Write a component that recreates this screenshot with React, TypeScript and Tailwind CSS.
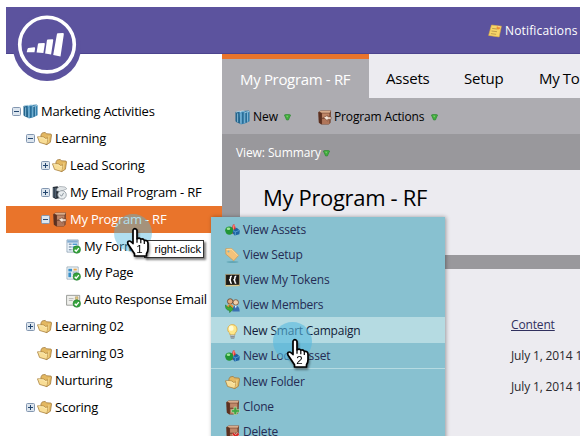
import type { ReactNode } from "react";

type IconName =
  | "books" | "folder" | "program" | "email" | "form" | "page" | "mail"
  | "assets" | "tag" | "tokens" | "members" | "bulb" | "clone" | "delete" | "note";

function Check() {
  return (
    <>
      <circle cx="11.5" cy="11.3" r="4" fill="#35a33c" stroke="#1f7a2c" strokeWidth=".6" />
      <path d="M9.3 11.4l1.6 1.7 2.8-3.4" fill="none" stroke="#fff" strokeWidth="1.4" />
    </>
  );
}

function Cabinet() {
  return (
    <>
      <path d="M1.5 2L4 .5h11l-.5 13-2 2H4.5L2 13.5z" fill="#754631" />
      <path d="M2.5 1.5L4.2.7H14.7L13.5 3H5z" fill="#d9ad8c" />
      <path d="M1.5 2L5 3.4v11.8L2 13.3z" fill="#5c3020" />
      <path d="M5.4 3.6h7.8v4.6H5.4z" fill="#bf8768" />
      <path d="M5.4 9.4h7.8V15H5.4z" fill="#b0765a" />
    </>
  );
}

const art: Record<IconName, ReactNode> = {
  books: (
    <>
      <path d="M.5 2L4.5 1 6 2.5V15L2 13.3.5 12z" fill="#24658d" />
      <path d="M4.5 1.5L9 .7l1.5 1.8v12L6 15.5z" fill="#438fbd" />
      <path d="M9 1L14.5.5 15.5 1.5V12L10.5 14.5z" fill="#3480ad" />
      <path d="M1 2.3L4.7 1.2l1.5 1.6M5.2 1.7L9 .9l1.5 1.8L15.2 1.6" fill="none" stroke="#c3e0ee" strokeWidth=".9" />
      <path d="M2.8 3.6v9.6M6.3 3.5v11M10.5 3.2v10.6M13.2 2.7v9.8" stroke="#a5d2e9" strokeWidth=".8" />
      <path d="M8.3 2.6v12M11.9 2.8v10.6" stroke="#1d587d" strokeWidth=".9" />
    </>
  ),
  folder: (
    <>
      <path d="M4.2 4.2L5.6 2l3.2-.5 1 1.4 5.2.4.5 1-1.2 7.7-3.8 2.5-6.3-3.5z" fill="#e3b862" stroke="#a0783a" strokeWidth=".8" />
      <path d="M.5 6.2l6.8.2 1.5 1.5 3.2-.5-1.5 7.1-7.8-2.3z" fill="#f8dd96" stroke="#a77c38" strokeWidth=".8" />
      <path d="M1.6 7l5.4.3 1.5 1.6 2-.2" fill="none" stroke="#fff1bd" strokeWidth=".8" />
      <path d="M12.8 5.2l-1.3 8" stroke="#f6da92" strokeWidth=".9" />
    </>
  ),
  program: (
    <>
      <Cabinet />
      <path d="M7 8l4.5-2.4v1.8H15v2.4h-3.5v2z" fill="#f9eadc" stroke="#6c3926" strokeWidth=".6" />
    </>
  ),
  email: (
    <>
      <path d="M.8 2l5-.7 2 2V14l-4 1-3-2z" fill="#252c34" />
      <path d="M5 4l3-2.5 6 .6 1.8 2-7 3-4-1z" fill="#e0e4e6" stroke="#868e96" strokeWidth=".6" />
      <path d="M2 3v10M4 3v11" stroke="#617489" />
      <circle cx="10.7" cy="10.5" r="4.5" fill="#e9edef" stroke="#8e979e" strokeWidth=".9" />
      <path d="M8.2 10.3l2.2 1.5 2-3.4" fill="none" stroke="#87929b" />
    </>
  ),
  form: (
    <>
      <path d="M1 1h12v13H1z" fill="#edf5fc" stroke="#7890a5" strokeWidth=".7" />
      <path d="M1.4 1.4h11.2v2.5H1.4z" fill="#83acd0" />
      <path d="M3 5.5h3M3 8.5h3M3 11.5h3" stroke="#526e8c" />
      <path d="M7 5.5h5M7 8.5h4" stroke="#4c99d2" strokeWidth="1.6" />
      <Check />
    </>
  ),
  page: (
    <>
      <path d="M1 1h12v13H1z" fill="#f1f6fa" stroke="#8498a8" strokeWidth=".7" />
      <path d="M2.5 2.8h4v3h-4zM2.5 7h3v5h-3z" fill="#398fc7" />
      <path d="M8 2.8h3.5v2H8z" fill="#e5a64e" />
      <path d="M7 6.5h5M7 8.5h5" stroke="#7c98af" />
      <Check />
    </>
  ),
  mail: (
    <>
      <path d="M.6 2.5h14V13H.6z" fill="#f0f0ec" stroke="#8d8f8b" strokeWidth=".9" />
      <path d="M3 6h5M3 8h4" stroke="#b2b3b0" />
      <path d="M10 4h2.8v3H10z" fill="#e3c67f" stroke="#9b8956" strokeWidth=".5" />
      <Check />
    </>
  ),
  assets: (
    <>
      <path d="M6 11.5l2.5-10h1.7L13 11z" fill="#d52a28" />
      <path d="M7.3 10L9 1.8l1.5.2L9 9z" fill="#ff8179" />
      <circle cx="4.6" cy="8" r="4.4" fill="#219535" />
      <ellipse cx="3.7" cy="6.2" rx="1.9" ry="1.3" fill="#9ce695" />
      <path d="M8.3 8.2l4.2-3.1 3.3 2.8-.5 4-5 1.3L8.3 11z" fill="#1d63a3" />
      <path d="M8.5 8.2l2.8 1.2 4-1.5M11 9.4v3.4" stroke="#68aadb" fill="none" strokeWidth=".8" />
    </>
  ),
  tag: (
    <>
      <ellipse cx="8" cy="15" rx="6.5" ry=".8" fill="#579fae" />
      <path d="M.8.8l6.4-.2 7.3 7.3-5.2 5.8L.9 6.5z" fill="#f4c27a" stroke="#cf9448" strokeWidth=".7" />
      <path d="M1.6 1.6l5.4-.3 6.7 6.7" fill="none" stroke="#ffe0a4" strokeWidth="1" />
      <circle cx="3.7" cy="3.7" r="1.1" fill="#83b5bb" />
    </>
  ),
  tokens: (
    <>
      <path d="M.6 1.5h14.8v12H.6z" fill="#1d1b18" stroke="#b6a178" strokeWidth=".8" />
      <path d="M7.3 3.5Q5.7 3.5 5.9 5.5q0 1.5-1.5 1.8Q5.9 7.6 5.9 9.3q0 1.7 1.4 1.7M12 3.5q-1.6 0-1.4 2 0 1.5-1.5 1.8 1.5.3 1.5 2 0 1.7 1.4 1.7" fill="none" stroke="#fff" strokeWidth="1.6" />
      <path d="M.6 13.5l14.8-.3" stroke="#d9c78b" strokeWidth="1.6" />
    </>
  ),
  members: (
    <>
      <circle cx="5.5" cy="3.7" r="2.9" fill="#e0ab7d" stroke="#5d3b25" strokeWidth=".8" />
      <path d="M1.5 11q.5-4.4 4-4.4t4.5 4.4z" fill="#e8953c" />
      <circle cx="11.5" cy="4.7" r="2.9" fill="#f1cfa9" stroke="#714527" strokeWidth=".8" />
      <path d="M7.8 14.3q-.2-6 3.7-6t4.2 6z" fill="#3970b0" />
      <path d="M10.5 8.3h2l-1 3z" fill="#fff" />
      <path d="M.6 7.3q1.2 3 4.3 2.7V8L9 11.8l-4.1 3.7v-2.2Q0 13 .6 7.3z" fill="#3fac35" stroke="#19752a" strokeWidth=".6" />
    </>
  ),
  bulb: (
    <>
      <path d="M5 9.7C1.3 7.2 2.6.9 7.8.6c5.2.1 6.6 6.3 3 9.1L10.4 12H5.5z" fill="#ffe889" stroke="#daa33a" strokeWidth=".8" />
      <ellipse cx="6.6" cy="4.5" rx="2.5" ry="2.8" fill="#fffbd3" />
      <path d="M5.5 11.5h5l-.6 3.9H6.2z" fill="#66727a" />
      <path d="M5.6 12.3h4.7M5.9 14h4.1" stroke="#c4cacd" />
    </>
  ),
  clone: (
    <>
      <Cabinet />
      <path d="M9.5 7.6h3v2.7h3v2.8h-3v2.4h-3v-2.4H7v-2.8h2.5z" fill="#3ea542" stroke="#d2efbf" strokeWidth=".6" />
    </>
  ),
  delete: (
    <>
      <Cabinet />
      <path d="M8.5 9l5.5 6M14.5 9l-6 6" stroke="#f5c1b8" strokeWidth="3.3" />
      <path d="M8.5 9l5.5 6M14.5 9l-6 6" stroke="#d42825" strokeWidth="2.1" />
    </>
  ),
  note: (
    <>
      <path d="M4 1.2L15.3 2.5l-2.6 12.3L.7 13z" fill="#f7d568" stroke="#e0b045" strokeWidth=".7" />
      <path d="M4.7 5l6 .8M4 8l6.3.8M3.3 11l6 .8" stroke="#a8873f" strokeWidth=".8" />
      <circle cx="11.8" cy="4.2" r="2" fill="#ed8d34" />
      <path d="M11 3l3 .3" stroke="#ffe7a3" />
    </>
  ),
};

function Icon({ name, small = false }: { name: IconName; small?: boolean }) {
  return (
    <svg viewBox="0 0 16 16" className={small ? "h-[14px] w-[14px] shrink-0" : "h-[15px] w-[15px] shrink-0"}>
      {art[name]}
    </svg>
  );
}

function Toggle({ open }: { open: boolean }) {
  return (
    <svg viewBox="0 0 9 9" className="h-[9px] w-[9px] shrink-0">
      <rect x=".5" y=".5" width="8" height="8" rx="1" fill="#dce5ee" stroke="#8397b0" />
      <path d={open ? "M2 4.5h5" : "M2 4.5h5M4.5 2v5"} stroke="#23466f" />
    </svg>
  );
}

function Drop() {
  return (
    <svg viewBox="0 0 7 7" className="h-[7px] w-[7px] shrink-0">
      <path d="M.4 1L1.6.5h3.8L6.6 1 4.4 6H2.6z" fill="#43ad3f" stroke="#28832f" strokeWidth=".6" />
      <path d="M2 1.8h2.2L3.4 3.5z" fill="#7fd06e" />
    </svg>
  );
}

function Logo() {
  return (
    <svg viewBox="0 0 68 68" className="h-[68px] w-[68px]">
      <circle cx="34" cy="34" r="34" fill="#5c539e" />
      <circle cx="34" cy="31.6" r="27.3" fill="none" stroke="#fff" strokeWidth="3.6" />
      <g fill="#fff">
        <path d="M15.4 35l5.7-.8q1.2 0 1 1.3l-.6 3.8h-7.8l.7-3.1q.2-1 1-1.2z" />
        <path d="M25.9 30.3l5.2-.4q.9 0 .7 1.3L30.4 40l-6.8-.5 1.3-8.2q.2-.9 1-1z" />
        <path d="M34.9 26.5l4.5-.3q1 0 .8 1.2l-2.1 14-6-.8 1.8-13.1q.1-.9 1-1z" />
        <path d="M44.9 20.3l5-.2q1.1 0 .9 1.3l-3.3 22.2-7.3-1.5 3.7-20.8q.1-.9 1-1z" />
      </g>
    </svg>
  );
}

function Hand({ step }: { step: string }) {
  return (
    <svg viewBox="0 0 26 31" className="h-[31px] w-[26px] drop-shadow-[1px_2px_1px_rgba(0,0,0,0.45)]">
      <path d="M8 3.2Q9.8 0 12 3.2v8.5q2.6-1.5 3.7.5 2.6-.8 3.6 1.2 3.6-.6 3.7 3v5.3q0 3-1.5 5.1V29H9.5v-2.3L3.8 18.2q-1.8-2.4-.7-3.7 1.8-1.6 4.9 2z" fill="#fff" stroke="#000" strokeWidth="1.7" strokeLinejoin="round" />
      <path d="M12 11.5v4.3M15.8 12.5v3.7M19.3 13.7V17" stroke="#000" strokeWidth="1.2" />
      <text x="14.5" y="26.3" textAnchor="middle" className="fill-black font-['Liberation_Sans',sans-serif] text-[11.5px]">{step}</text>
    </svg>
  );
}

type Node = { label: string; icon: IconName; pad: string; toggle?: "open" | "closed"; active?: boolean };

const tree: Node[] = [
  { label: "Marketing Activities", icon: "books", pad: "pl-[6px]", toggle: "open" },
  { label: "Learning", icon: "folder", pad: "pl-[20px]", toggle: "open" },
  { label: "Lead Scoring", icon: "folder", pad: "pl-[35px]", toggle: "closed" },
  { label: "My Email Program - RF", icon: "email", pad: "pl-[35px]", toggle: "closed" },
  { label: "My Program - RF", icon: "program", pad: "pl-[35px]", toggle: "open", active: true },
  { label: "My Form", icon: "form", pad: "pl-[49px]" },
  { label: "My Page", icon: "page", pad: "pl-[49px]" },
  { label: "Auto Response Email", icon: "mail", pad: "pl-[49px]" },
  { label: "Learning 02", icon: "folder", pad: "pl-[20px]", toggle: "closed" },
  { label: "Learning 03", icon: "folder", pad: "pl-[20px]" },
  { label: "Nurturing", icon: "folder", pad: "pl-[20px]" },
  { label: "Scoring", icon: "folder", pad: "pl-[20px]", toggle: "closed" },
];

const menu: { label: string; icon: IconName }[] = [
  { label: "View Assets", icon: "assets" },
  { label: "View Setup", icon: "tag" },
  { label: "View My Tokens", icon: "tokens" },
  { label: "View Members", icon: "members" },
  { label: "New Smart Campaign", icon: "bulb" },
  { label: "New Local Asset", icon: "assets" },
  { label: "New Folder", icon: "folder" },
  { label: "Clone", icon: "clone" },
  { label: "Delete", icon: "delete" },
];

function Sidebar() {
  return (
    <aside className="w-[216px] shrink-0 bg-white pt-[44.4px]">
      {tree.map((n) => (
        <div key={n.label} className={`flex h-[26.9px] items-center whitespace-nowrap text-[13px] tracking-[-0.23px] ${n.pad} ${n.active ? "bg-[#e9742b] text-white" : "text-black"}`}>
          <span className="flex w-[11px] shrink-0">{n.toggle && <Toggle open={n.toggle === "open"} />}</span>
          {n.toggle || n.icon === "folder" ? null : <span className="w-0" />}
          <Icon name={n.icon} />
          <span className="ml-[3px]">{n.label}</span>
        </div>
      ))}
    </aside>
  );
}

function Main() {
  return (
    <main className="flex min-w-0 flex-1 flex-col">
      <nav className="flex h-[44px] shrink-0 bg-[#ecebf0] text-[15px] whitespace-nowrap text-black">
        <div className="flex w-[147px] shrink-0 items-center border-t-[5px] border-[#e9742b] bg-[#adacb1] pl-[18px] tracking-[-0.33px] text-white">
          <span className="pt-[1px]">My Program - RF</span>
        </div>
        <div className="flex items-center pt-[5px] pl-[17px] tracking-[-0.2px]">
          <span className="w-[78px]">Assets</span>
          <span className="w-[75px]">Setup</span>
          <span className="tracking-[-0.35px]">My Tokens</span>
        </div>
      </nav>
      <div className="flex h-[36px] shrink-0 items-center bg-[#adacb1] pt-[2px] pl-[13px] text-[12px] text-black">
        <Icon name="books" />
        <span className="ml-[3px] w-[31px]">New</span>
        <Drop />
        <span className="ml-[26px] flex"><Icon name="program" /></span>
        <span className="ml-[2px] w-[97px] tracking-[-0.15px] whitespace-nowrap">Program Actions</span>
        <Drop />
      </div>
      <div className="flex h-[36px] shrink-0 items-center bg-[#99989c] pt-[2px] pl-[14px] text-[12px] font-medium text-white">
        <span className="mr-[2px] tracking-[-0.1px] whitespace-nowrap">View: Summary</span>
        <Drop />
      </div>
      <div className="flex flex-1 flex-col border-l-[18px] border-[#99989c]">
        <section className="h-[85px] shrink-0 bg-[#ecebf0] pt-[10px] pl-[23px] text-[22px] leading-[34px] tracking-[-0.33px] whitespace-nowrap text-black">My Program - RF</section>
        <div className="h-[14px] shrink-0 bg-[#99989c]" />
        <section className="flex flex-1 flex-col items-start bg-[#ecebf0] pt-[47px] pl-[271px] text-[12px] leading-[18px] tracking-[-0.15px] whitespace-nowrap text-[#29282c]">
          <span className="text-[#30305e] underline">Content</span>
          <span className="mt-[13px]">July 1, 2014 10:05 AM</span>
          <span className="mt-[13px]">July 1, 2014 10:05 AM</span>
        </section>
      </div>
    </main>
  );
}

function ContextMenu() {
  return (
    <div className="absolute top-[210px] left-[205px] h-[240px] w-[234px] bg-[#88c1d0] text-[#252c54] shadow-[1px_0_4px_rgba(0,0,0,0.35)]">
      {menu.map((m) => {
        const active = m.label === "New Smart Campaign";
        const divided = m.label === "New Folder";
        return (
          <div key={m.label} className={`flex items-center pl-[14px] text-[12px] tracking-[-0.2px] whitespace-nowrap ${active ? "h-[26px] bg-[#b5dbe2] pt-[2px] text-[#111b38]" : divided ? "h-[26px] border-t border-[#b5dbe2] pt-[1px]" : "h-[25px] pt-[1px]"}`}>
            <Icon name={m.icon} />
            <span className="ml-[3px]">{m.label}</span>
          </div>
        );
      })}
    </div>
  );
}

export default function App() {
  return (
    <div className="h-[442px] w-[585px] overflow-hidden bg-white pt-[7px] pl-[6px] font-['Open_Sans','Noto_Sans',sans-serif]">
      <div className="relative flex h-[429px] w-[574px] flex-col overflow-hidden">
        <header className="flex h-[47px] shrink-0 items-center border-b border-[#4c448e] bg-[#5c539e] pt-[2px] pl-[482px] text-[12px] font-medium tracking-[0.15px] text-white">
          <Icon name="note" small />
          <span className="ml-[3px]">Notifications</span>
        </header>
        <div className="flex min-h-0 flex-1">
          <Sidebar />
          <Main />
        </div>
        <div className="absolute top-[6px] left-[7px]"><Logo /></div>
        <ContextMenu />
        <div className="absolute top-[207px] left-[108px] h-[38px] w-[38px] rounded-full bg-[#51b7de]/45" />
        <div className="absolute top-[233px] left-[138px] flex h-[18px] w-[60px] items-center justify-end border-[1.5px] border-[#333] bg-white pr-[2px] font-['Liberation_Sans',sans-serif] text-[11px] whitespace-nowrap text-black shadow-[2px_2px_2px_rgba(0,0,0,0.5)]">right-click</div>
        <div className="absolute top-[220px] left-[119px]"><Hand step="1" /></div>
        <div className="absolute top-[315px] left-[267px] h-[39px] w-[39px] rounded-full bg-[#56b9df]/60" />
        <div className="absolute top-[331px] left-[279px]"><Hand step="2" /></div>
      </div>
    </div>
  );
}
